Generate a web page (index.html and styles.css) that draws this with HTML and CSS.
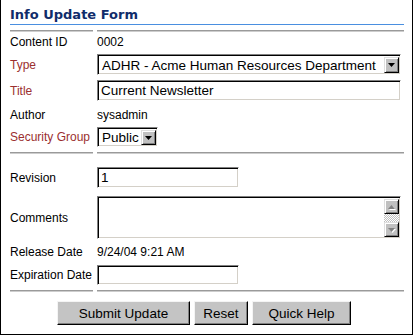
FILE: index.html
```html
<!DOCTYPE html>
<html>
<head>
<meta charset="utf-8">
<link rel="stylesheet" href="styles.css">
</head>
<body>
<div class="panel">
  <div class="head">Info Update Form</div>
  <div class="sep sep-1"><span></span><span></span></div>

  <div class="row row-cid"><div class="lbl">Content ID</div><div class="val">0002</div></div>

  <div class="row row-type">
    <div class="lbl req">Type</div>
    <div class="field select w-full">
      <span class="sel-text">ADHR - Acme Human Resources Department</span>
      <span class="btn3d arrow"><svg width="7" height="4" viewBox="0 0 7 4"><polygon points="0,0 7,0 3.5,4" fill="#000"/></svg></span>
    </div>
  </div>

  <div class="row row-title">
    <div class="lbl req">Title</div>
    <input class="field input w-full" type="text" value="Current Newsletter">
  </div>

  <div class="row row-author"><div class="lbl">Author</div><div class="val">sysadmin</div></div>

  <div class="row row-sec">
    <div class="lbl req">Security Group</div>
    <div class="field select w-sm sel-sm">
      <span class="sel-text">Public</span>
      <span class="btn3d arrow"><svg width="7" height="4" viewBox="0 0 7 4"><polygon points="0,0 7,0 3.5,4" fill="#000"/></svg></span>
    </div>
  </div>

  <div class="sep sep-2"><span></span><span></span></div>

  <div class="row row-rev">
    <div class="lbl">Revision</div>
    <input class="field input w-mid" type="text" value="1">
  </div>

  <div class="row row-com">
    <div class="lbl">Comments</div>
    <div class="field ta w-full">
      <textarea class="ta-area"></textarea>
      <div class="sb">
        <span class="btn3d sb-btn"><svg width="9" height="6" viewBox="0 0 9 6"><polygon points="4.5,1 8,5 1,5" fill="#fff" transform="translate(1,1)"/><polygon points="4.5,1 8,5 1,5" fill="#808080"/></svg></span>
        <span class="sb-track"></span>
        <span class="btn3d sb-btn"><svg width="9" height="6" viewBox="0 0 9 6"><polygon points="1,1 8,1 4.5,5" fill="#fff" transform="translate(1,1)"/><polygon points="1,1 8,1 4.5,5" fill="#808080"/></svg></span>
      </div>
    </div>
  </div>

  <div class="row row-rel"><div class="lbl">Release Date</div><div class="val">9/24/04 9:21 AM</div></div>

  <div class="row row-exp">
    <div class="lbl">Expiration Date</div>
    <input class="field input w-mid h20" type="text" value="">
  </div>

  <div class="sep sep-3"><span></span><span></span></div>

  <div class="btns">
    <button class="btn btn-submit" type="button">Submit Update</button>
    <button class="btn btn-reset" type="button">Reset</button>
    <button class="btn btn-help" type="button">Quick Help</button>
  </div>
</div>
</body>
</html>
```

FILE: styles.css
```css
* { box-sizing: border-box; }
html, body { margin: 0; padding: 0; background: #fff; }

.panel {
  width: 413px;
  height: 335px;
  border: 1px solid #000;
  border-top: none;
  padding: 0 8px 0 9px;
  font-family: "Liberation Sans", Arial, sans-serif;
  font-size: 12px;
  color: #000;
  overflow: hidden;
}

.head {
  font-family: "DejaVu Sans", Verdana, sans-serif;
  font-weight: bold;
  font-size: 13px;
  line-height: 16px;
  color: #102c6a;
  padding: 7px 0 1px 0;
  border-bottom: 1px solid #4a8fe0;
}

.sep {
  display: grid;
  grid-template-columns: 83px 307px;
  column-gap: 4px;
}
.sep span {
  display: block;
  height: 2px;
  border-top: 1px solid #9a9a9a;
  border-bottom: 1px solid #cdcdcd;
}
.sep-1 { margin-top: 5px; }
.sep-2 { margin-top: 5px; }
.sep-3 { margin-top: 5px; }

.row {
  display: grid;
  grid-template-columns: 83px 307px;
  column-gap: 4px;
  align-items: center;
}
.lbl { white-space: nowrap; line-height: 14px; }
.val { white-space: nowrap; line-height: 14px; }
.req { color: #9b2f2f; }

.row-cid { margin-top: 3px; height: 14px; }
.row-type { margin-top: 5px; height: 21px; }
.row-title { margin-top: 5px; height: 21px; }
.row-author { margin-top: 6px; height: 15px; }
.row-sec { margin-top: 5px; height: 20px; }
.row-rev { margin-top: 13px; height: 21px; }
.row-com { margin-top: 8px; height: 43px; }
.row-rel { margin-top: 6px; height: 14px; }
.row-exp { margin-top: 6px; height: 20px; }

.field {
  height: 21px;
  margin: 0;
  border: 1px solid;
  border-color: #808080 #fff #fff #808080;
  box-shadow: inset 1px 1px #000, inset -1px -1px #d4d0c8;
  background: #fff;
  font-family: "Liberation Sans", Arial, sans-serif;
  font-size: 13.5px;
  color: #000;
  outline: none;
}
.h20 { height: 20px; }
.w-full { width: 304px; }
.w-mid { width: 142px; }
.w-sm { width: 61px; }

.input { padding: 0 2px 0 3px; }

.select {
  display: flex;
  align-items: stretch;
  padding: 2px 1px 1px 2px;
}
.sel-sm { height: 20px; }
.sel-text {
  flex: 1;
  display: flex;
  align-items: center;
  padding-left: 2px;
  white-space: nowrap;
  overflow: hidden;
}

.btn3d {
  display: flex;
  align-items: center;
  justify-content: center;
  background: #c0c0c0;
  border: 1px solid;
  border-color: #dfdfdf #000 #000 #dfdfdf;
  box-shadow: inset 1px 1px #fff, inset -1px -1px #808080;
}
.arrow { width: 15px; flex: none; }

.ta {
  height: 43px;
  display: flex;
  padding: 2px 1px 1px 2px;
}
.ta-area {
  flex: 1;
  border: none;
  outline: none;
  resize: none;
  margin: 0;
  padding: 0;
  background: transparent;
  overflow: hidden;
}
.sb {
  width: 15px;
  display: flex;
  flex-direction: column;
}
.sb-btn { height: 15px; flex: none; }
.sb-track {
  flex: 1;
  background: repeating-conic-gradient(#c0c0c0 0 25%, #fff 0 50%) 0 0 / 2px 2px;
}

.btns {
  display: flex;
  gap: 4px;
  margin-top: 9px;
  padding-left: 47px;
}
.btn {
  height: 24px;
  margin: 0;
  padding: 0;
  background: #c4c4c4;
  border: 1px solid;
  border-color: #f4f4f4 #000 #000 #f4f4f4;
  box-shadow: inset -1px -1px #808080;
  font-family: "Liberation Sans", Arial, sans-serif;
  font-size: 13.5px;
  color: #000;
  display: flex;
  align-items: center;
  justify-content: center;
}
.btn-submit { width: 133px; }
.btn-reset { width: 54px; }
.btn-help { width: 99px; }
```
